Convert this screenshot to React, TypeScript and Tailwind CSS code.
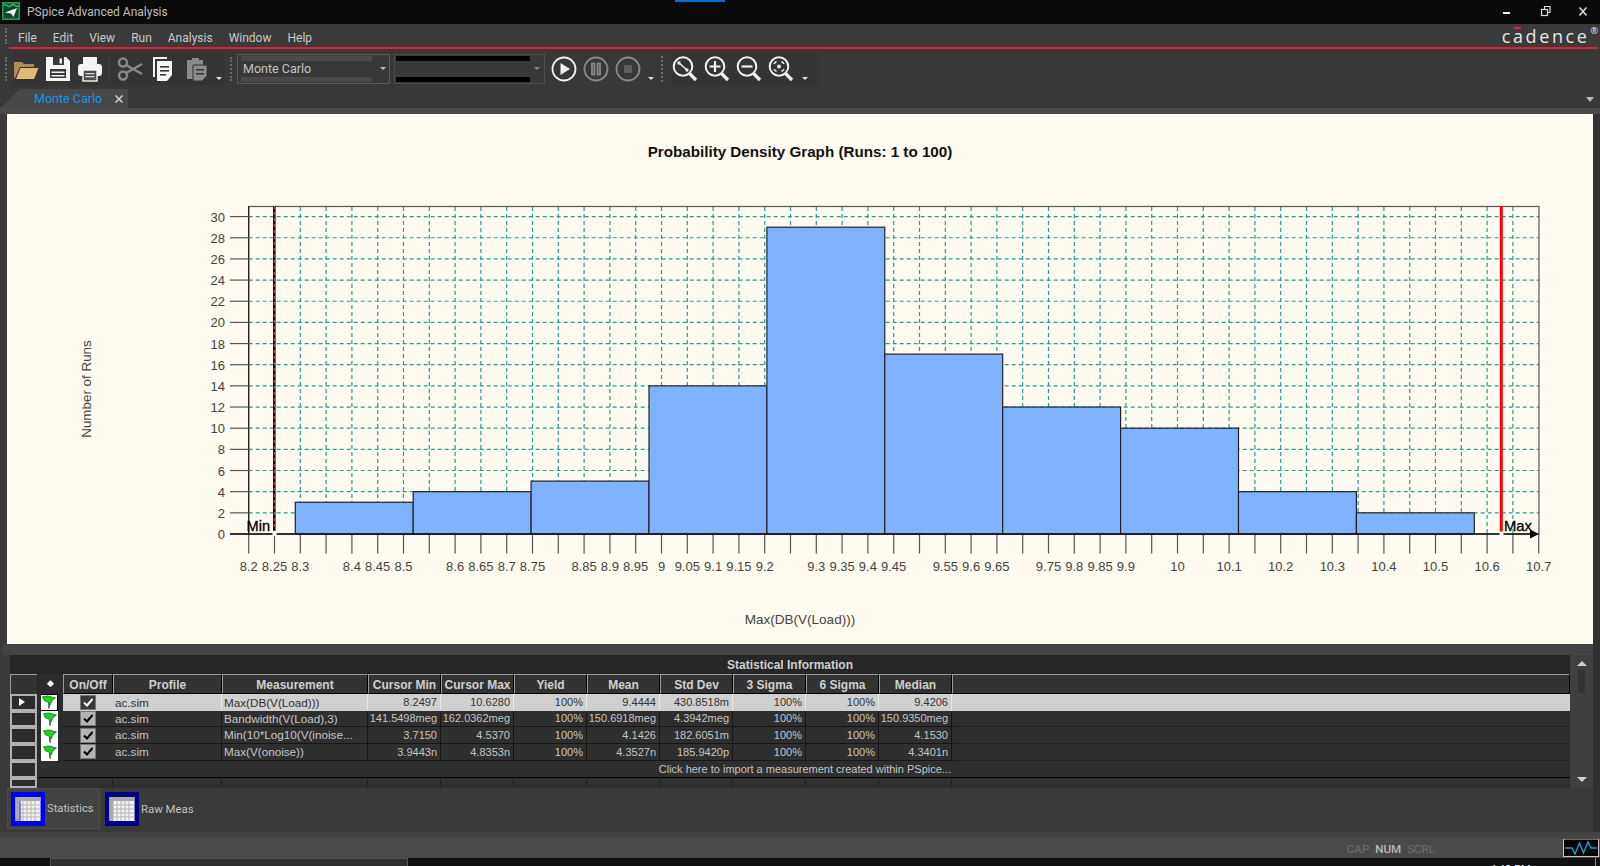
import React from "react";

const UI = "font-['Roboto','Noto_Sans',sans-serif]";
const GRID = "font-['Liberation_Sans',Arial,sans-serif]";

const yTicks = Array.from({ length: 16 }, (_, i) => i * 2);
const Y0 = 534;
const UNIT = 10.58;
const X0 = 248.7;
const XSTEP = 25.8;
const xTickCount = 50;
const bars = [3, 4, 5, 14, 29, 17, 12, 10, 4, 2];
const BAR0 = 295.3;
const BARW = 117.9;
const xLabels: [number, string][] = [
  [0, "8.2"], [1, "8.25"], [2, "8.3"], [4, "8.4"], [5, "8.45"], [6, "8.5"], [8, "8.6"], [9, "8.65"], [10, "8.7"], [11, "8.75"],
  [13, "8.85"], [14, "8.9"], [15, "8.95"], [16, "9"], [17, "9.05"], [18, "9.1"], [19, "9.15"], [20, "9.2"], [22, "9.3"], [23, "9.35"],
  [24, "9.4"], [25, "9.45"], [27, "9.55"], [28, "9.6"], [29, "9.65"], [31, "9.75"], [32, "9.8"], [33, "9.85"], [34, "9.9"], [36, "10"],
  [38, "10.1"], [40, "10.2"], [42, "10.3"], [44, "10.4"], [46, "10.5"], [48, "10.6"], [50, "10.7"],
];

function Chart() {
  const font = "'Liberation Sans', Arial, sans-serif";
  return (
    <svg viewBox="7 114 1586 530" className="block w-full h-full" fontFamily={font}>
      <text x="800" y="157" textAnchor="middle" fontSize="15.2" fontWeight="700" fill="#111">
        Probability Density Graph (Runs: 1 to 100)
      </text>
      <text transform="translate(91 389) rotate(-90)" textAnchor="middle" fontSize="13.4" fill="#444">
        Number of Runs
      </text>
      <text x="800" y="624" textAnchor="middle" fontSize="13.5" fill="#444">
        Max(DB(V(Load)))
      </text>
      {/* grid */}
      {yTicks.slice(1).map((t) => (
        <line key={t} x1={X0} x2="1539" y1={Y0 - t * UNIT} y2={Y0 - t * UNIT} stroke="#2a9a9a" strokeWidth="1.2" strokeDasharray="4 3" />
      ))}
      {Array.from({ length: xTickCount - 1 }, (_, i) => i + 1).map((i) => (
        <line key={i} x1={X0 + i * XSTEP} x2={X0 + i * XSTEP} y1="207" y2={Y0} stroke="#2a9a9a" strokeWidth="1.2" strokeDasharray="4 3" />
      ))}
      {/* frame */}
      <rect x={X0} y="206.5" width="1290.3" height={Y0 - 206.5} fill="none" stroke="#555" strokeWidth="1.2" />
      <line x1={X0} x2={X0} y1="206" y2={Y0} stroke="#222" strokeWidth="1.2" />
      {/* bars */}
      {bars.map((b, i) => (
        <rect key={i} x={BAR0 + i * BARW} y={Y0 - b * UNIT} width={BARW} height={b * UNIT} fill="#80b3ff" stroke="#222" strokeWidth="1.2" />
      ))}
      {/* y ticks */}
      {yTicks.map((t) => (
        <g key={t}>
          <line x1="230" x2={X0} y1={Y0 - t * UNIT} y2={Y0 - t * UNIT} stroke="#555" strokeWidth="1.2" />
          <text x="225" y={Y0 - t * UNIT + 5} textAnchor="end" fontSize="13" fill="#444">{t}</text>
        </g>
      ))}
      {/* x ticks */}
      {Array.from({ length: xTickCount + 1 }, (_, i) => i).map((i) => (
        <line key={i} x1={X0 + i * XSTEP} x2={X0 + i * XSTEP} y1={Y0} y2="553.5" stroke="#555" strokeWidth="1.2" />
      ))}
      {xLabels.map(([i, l]) => (
        <text key={l} x={X0 + i * XSTEP} y="571" textAnchor="middle" fontSize="13" fill="#444">{l}</text>
      ))}
      {/* axis */}
      <line x1="230" x2="1532" y1={Y0} y2={Y0} stroke="#111" strokeWidth="1.6" />
      <path d="M1530 529.5 L1539 534 L1530 538.5 Z" fill="#000" />
      {/* cursors */}
      <line x1="274.3" x2="274.3" y1="206" y2={Y0} stroke="#111" strokeWidth="2.6" />
      <line x1="274.3" x2="274.3" y1="206" y2={Y0} stroke="#e0536a" strokeWidth="1" strokeDasharray="3 3" />
      <line x1="1501.3" x2="1501.3" y1="206" y2={Y0} stroke="#ff0000" strokeWidth="3" />
      <rect x="272.5" y="531" width="4" height="5" fill="#fffbf0" />
      <rect x="1499.5" y="531.5" width="4" height="5" fill="#fffbf0" />
      <text x="246.5" y="531" fontSize="14.6" fill="#000" stroke="#000" strokeWidth="0.3">Min</text>
      <text x="1504" y="531" fontSize="14.8" fill="#000" stroke="#000" strokeWidth="0.3">Max</text>
    </svg>
  );
}

function Gripper({ h = "h-6" }: { h?: string }) {
  return <div className={`w-0 border-l-2 border-dotted border-[#6a6a6a] ${h}`} />;
}

function ArrowDown() {
  return <div className="w-0 h-0 border-l-[3px] border-r-[3px] border-t-[3px] border-l-transparent border-r-transparent border-t-[#e0e0e0]" />;
}

function Icon({ children, dim = false }: { children: React.ReactNode; dim?: boolean }) {
  return (
    <svg viewBox="0 0 26 26" className={`w-[26px] h-[26px] shrink-0 ${dim ? "opacity-45" : ""}`}>
      {children}
    </svg>
  );
}

function RoundBtn({ kind }: { kind: "play" | "pause" | "stop" }) {
  const c = kind === "play" ? "#f2f2f2" : "#8a8a8a";
  return (
    <svg viewBox="0 0 26 26" className="w-[26px] h-[26px] shrink-0">
      <circle cx="13" cy="13" r="11.5" fill="none" stroke={c} strokeWidth="1.8" />
      {kind === "play" && <path d="M9.5 7 L19 13 L9.5 19 Z" fill="#f2f2f2" />}
      {kind === "pause" && (
        <g stroke={c} strokeWidth="1.8" fill="none">
          <rect x="9" y="7.5" width="2.4" height="11" />
          <rect x="14.6" y="7.5" width="2.4" height="11" />
        </g>
      )}
      {kind === "stop" && <rect x="9" y="9" width="8" height="8" fill="#5e5e5e" />}
    </svg>
  );
}

function Magnifier({ kind }: { kind: "fit" | "in" | "out" | "area" }) {
  return (
    <svg viewBox="0 0 26 26" className="w-[26px] h-[26px] shrink-0" fill="none" stroke="#f0f0f0">
      <circle cx="11" cy="10.5" r="9.3" strokeWidth="2" />
      <path d="M17.5 17.5 L24 24" strokeWidth="3.2" />
      {kind === "in" && <path d="M5.5 10.5 H16.5 M11 5 V16" strokeWidth="2.2" />}
      {kind === "out" && <path d="M5.5 10.5 H16.5" strokeWidth="2.2" />}
      {kind === "fit" && (
        <g>
          <path d="M7.5 7.5 L14.5 13.5" strokeWidth="1.6" />
          <circle cx="7" cy="7" r="1.7" fill="#f0f0f0" stroke="none" />
          <circle cx="15" cy="14" r="1.7" fill="#f0f0f0" stroke="none" />
        </g>
      )}
      {kind === "area" && (
        <g>
          <circle cx="11" cy="10.5" r="2" fill="#f0f0f0" stroke="none" />
          <path d="M6 8 A6 6 0 0 1 8.5 5.5 M13.5 5.5 A6 6 0 0 1 16 8 M16 13 A6 6 0 0 1 13.5 15.5 M8.5 15.5 A6 6 0 0 1 6 13" strokeWidth="1.5" />
        </g>
      )}
    </svg>
  );
}

function TitleBar() {
  return (
    <div className="relative h-6 shrink-0 bg-[#0a0a0a] flex items-center pl-[2px] pr-[8px]">
      <div className="absolute left-[675px] top-0 w-[50px] h-[2px] bg-[#0a6fd0]" />
      <svg viewBox="0 0 18 18" className="w-[18px] h-[18px] mt-[-2px] shrink-0">
        <rect x="0.8" y="0.8" width="16.4" height="16.4" fill="#0d4a2c" stroke="#1f9a4e" strokeWidth="1.6" />
        <path d="M1 4 Q3 1.5 5 3.5 T9 3.5 T13 3.5 T17 3.5" fill="none" stroke="#35c06a" strokeWidth="1.2" />
        <path d="M3 10.5 L15 6 L11.5 15 L9 11.5 Z" fill="#f0f0f0" />
      </svg>
      <span className={`${UI} ml-[7px] text-[12px] text-[#bdbdbd]`}>PSpice Advanced Analysis</span>
      <div className="ml-auto flex items-center gap-[24px] text-[#e8e8e8]">
        <svg viewBox="0 0 14 14" className="w-[14px] h-[14px]"><rect x="1" y="7" width="7" height="2" fill="#eee" /></svg>
        <svg viewBox="0 0 14 14" className="w-[14px] h-[14px]" fill="none" stroke="#ddd" strokeWidth="1.2">
          <rect x="1.5" y="4.5" width="6" height="6" />
          <path d="M4.5 4 V1.5 H10 V7.5 H8" />
        </svg>
        <svg viewBox="0 0 14 14" className="w-[14px] h-[14px]" fill="none" stroke="#ddd" strokeWidth="1.5">
          <path d="M1.5 2.5 L8.5 10.5 M8.5 2.5 L1.5 10.5" />
        </svg>
      </div>
    </div>
  );
}

function MenuBar() {
  return (
    <div className="h-[25px] shrink-0 bg-[#3a3a3a] flex flex-col">
      <div className="flex-1 flex items-center pl-[5px] pr-[2px]">
        <Gripper h="h-[16px]" />
        <div className={`${UI} ml-[11px] mt-[5px] flex items-center gap-[15px] text-[12px] text-[#c9c9c9]`}>
          <span className="mr-px">File</span>
          <span className="mr-px">Edit</span>
          <span className="mr-px">View</span>
          <span className="mr-px">Run</span>
          <span className="mr-px">Analysis</span>
          <span className="mr-px">Window</span>
          <span>Help</span>
        </div>
        <div className="ml-auto flex items-start font-['Open_Sans',sans-serif] font-medium text-[#e6e6e6]">
          <span className="relative text-[18px] leading-[20px] tracking-[2.6px]">
            cadence
            <span className="absolute left-[12px] top-[1px] w-[7px] h-[2px] bg-[#d9283c]" />
          </span>
          <span className="text-[9px] leading-[12px] ml-[1px] -mt-[1px]">®</span>
        </div>
      </div>
      <div className="h-[3px] ml-[9px] mr-[2px] bg-[#e01e37] shrink-0" />
    </div>
  );
}

function Toolbar() {
  return (
    <div className="h-[39px] shrink-0 bg-[#383838] flex items-center pl-[5px]">
      <Gripper h="h-[24px]" />
      <div className="ml-[6px] flex items-center gap-[6px] bg-[#343434] h-[34px]">
        <Icon>
          <path d="M1 6 H9 L11 8 H21 V11 H7 L2 22 H1 Z" fill="#b08a55" />
          <path d="M7.5 12 H25.5 L21 23 H3 Z" fill="#e0b878" />
        </Icon>
        <Icon>
          <path d="M1 1 H21 L25 5 V25 H1 Z" fill="#f4f4f4" />
          <rect x="8" y="1" width="11" height="8" fill="#383838" />
          <rect x="14.5" y="2.5" width="2.5" height="5" fill="#f4f4f4" />
          <rect x="5" y="13" width="16" height="9" fill="#383838" />
          <rect x="6.5" y="15.5" width="13" height="1.5" fill="#f4f4f4" />
          <rect x="6.5" y="19" width="13" height="1.5" fill="#f4f4f4" />
        </Icon>
        <Icon>
          <rect x="6" y="1" width="14" height="7" fill="#f4f4f4" />
          <rect x="1" y="8" width="24" height="12" rx="3" fill="#f4f4f4" />
          <rect x="6" y="14" width="14" height="11" fill="#4d4d4d" stroke="#f4f4f4" strokeWidth="1.4" />
          <rect x="8.5" y="17" width="9" height="1.3" fill="#d8d8d8" />
          <rect x="8.5" y="20" width="9" height="1.3" fill="#d8d8d8" />
        </Icon>
        <div className="w-px h-[30px] bg-[#404040] mr-[1px]" />
        <Icon dim>
          <g fill="none" stroke="#f0f0f0" strokeWidth="2.4">
            <circle cx="6" cy="6.5" r="4" />
            <circle cx="6" cy="19.5" r="4" />
            <path d="M9 9 L25 18 M9 17 L25 8" />
          </g>
        </Icon>
        <div className="mr-[1px]">
          <Icon>
            <path d="M4 1 H18 V3 H6 V21 H4 Z" fill="#f4f4f4" />
            <path d="M8 5 H23 V19 L18 25 H8 Z" fill="#f4f4f4" />
            <rect x="11" y="10" width="9" height="1.6" fill="#383838" />
            <rect x="11" y="14" width="9" height="1.6" fill="#383838" />
            <rect x="11" y="18" width="6" height="1.6" fill="#383838" />
          </Icon>
        </div>
        <div className="ml-[2px]">
          <Icon dim>
            <path d="M3 4 H8 V2 H15 V4 H19 V23 H3 Z" fill="#f4f4f4" />
            <path d="M9 9 H23 V20 L18 25 H9 Z" fill="#f4f4f4" stroke="#383838" />
            <rect x="12" y="13" width="8" height="1.5" fill="#383838" />
            <rect x="12" y="17" width="8" height="1.5" fill="#383838" />
          </Icon>
        </div>
        <div className="mt-[20px] mr-[3px]"><ArrowDown /></div>
      </div>
      <div className="ml-[5px]"><Gripper h="h-[24px]" /></div>
      {/* combo 1 */}
      <div className="ml-[5px] w-[153px] h-[30px] border border-[#5a5a5a] flex items-center pr-[3px]">
        <div className="w-[135px] h-full flex flex-col justify-between py-[1px] pl-[3px] pr-[1px] relative">
          <div className="h-[5px] bg-[#494949]" />
          <div className="h-[5px] bg-[#494949]" />
          <span className={`${UI} absolute left-[5px] top-[5px] text-[12.5px] leading-[18px] text-[#c4c4c4]`}>Monte Carlo</span>
        </div>
        <div className="ml-auto opacity-80"><ArrowDown /></div>
      </div>
      {/* combo 2 */}
      <div className="ml-[4px] w-[151px] h-[30px] border border-[#4e4e4e] flex items-center pr-[4px]">
        <div className="w-[135px] h-full flex flex-col justify-between py-[1px] pl-[1px]">
          <div className="h-[5px] bg-black" />
          <div className="h-[5px] bg-black" />
        </div>
        <div className="ml-auto opacity-50"><ArrowDown /></div>
      </div>
      <div className="ml-[6px] flex items-center gap-[6px]">
        <RoundBtn kind="play" />
        <RoundBtn kind="pause" />
        <RoundBtn kind="stop" />
      </div>
      <div className="ml-[7px] mt-[20px]"><ArrowDown /></div>
      <div className="ml-[7px]"><Gripper h="h-[26px]" /></div>
      <div className="ml-[9px] flex items-center gap-[6px] bg-[#343434] h-[34px] pr-[9px]">
        <Magnifier kind="fit" />
        <Magnifier kind="in" />
        <Magnifier kind="out" />
        <Magnifier kind="area" />
        <div className="ml-[2px] mt-[20px]"><ArrowDown /></div>
      </div>
    </div>
  );
}

function TabStrip() {
  return (
    <div className="h-5 shrink-0 bg-[#383838] flex items-end pr-[6px]">
      <div className="relative w-[128px] h-[19px] ml-0 flex items-center">
        <svg viewBox="0 0 128 19" className="absolute inset-0 w-full h-full">
          <path d="M0 19 L20 0 H128 V19 Z" fill="#474747" />
        </svg>
        <span className={`${UI} relative ml-[34px] mt-[2px] text-[12.5px] text-[#0c9be8]`}>Monte Carlo</span>
        <svg viewBox="0 0 10 10" className="relative ml-auto mr-[4px] w-[10px] h-[10px]" fill="none" stroke="#cfcfcf" strokeWidth="1.6">
          <path d="M1.5 1.5 L8.5 8.5 M8.5 1.5 L1.5 8.5" />
        </svg>
      </div>
      <div className="ml-auto mb-[6px] w-0 h-0 border-l-[4px] border-r-[4px] border-t-[5px] border-l-transparent border-r-transparent border-t-[#bdbdbd]" />
    </div>
  );
}

const colW = ["w-[50px]", "w-[109px]", "w-[146px]", "w-[73px]", "w-[73px]", "w-[73px]", "w-[73px]", "w-[73px]", "w-[73px]", "w-[73px]", "w-[73px]"];
const headers = ["On/Off", "Profile", "Measurement", "Cursor Min", "Cursor Max", "Yield", "Mean", "Std Dev", "3 Sigma", "6 Sigma", "Median"];
const rows: string[][] = [
  ["ac.sim", "Max(DB(V(Load)))", "8.2497", "10.6280", "100%", "9.4444", "430.8518m", "100%", "100%", "9.4206"],
  ["ac.sim", "Bandwidth(V(Load),3)", "141.5498meg", "162.0362meg", "100%", "150.6918meg", "4.3942meg", "100%", "100%", "150.9350meg"],
  ["ac.sim", "Min(10*Log10(V(inoise...", "3.7150", "4.5370", "100%", "4.1426", "182.6051m", "100%", "100%", "4.1530"],
  ["ac.sim", "Max(V(onoise))", "3.9443n", "4.8353n", "100%", "4.3527n", "185.9420p", "100%", "100%", "4.3401n"],
];

function HeadCell({ className, children }: { className: string; children?: React.ReactNode }) {
  return (
    <div className={`${className} shrink-0 h-full flex items-center justify-center pt-px bg-[#333] border-t border-l border-t-[#9a9a9a] border-l-[#9a9a9a] border-b border-r border-b-black border-r-black text-[12px] font-bold text-[#cfcfcf]`}>
      {children}
    </div>
  );
}

function RowHead({ active = false }: { active?: boolean }) {
  return (
    <div className="w-[28px] shrink-0 h-full pr-px">
      <div className="h-full border-2 border-[#b0b0b0] bg-[#2c2c2c] flex items-center pl-[7px]">
        {active && <div className="w-0 h-0 border-t-[4px] border-b-[4px] border-l-[6px] border-t-transparent border-b-transparent border-l-white" />}
      </div>
    </div>
  );
}

function FlagCell({ active }: { active: boolean }) {
  return (
    <div className="w-[24px] shrink-0 h-full pl-[3px] pr-[4px] bg-[#2c2c2c]">
      <div className={`h-full bg-white flex items-center justify-center ${active ? "border-y border-r border-black" : ""}`}>
        <svg viewBox="0 0 12 12" className="w-[14px] h-[14px]">
          <path d="M6 4 V11.5" stroke="#111" strokeWidth="1" />
          <path d="M0.5 1.5 L5 0.8 L11.5 2.5 L8.5 5 L7 8.5 L5 6 L2 5 Z" fill="#16d616" stroke="#0a5a20" strokeWidth="0.6" />
        </svg>
      </div>
    </div>
  );
}

function Check({ active }: { active: boolean }) {
  return (
    <div className={`${colW[0]} shrink-0 h-full flex items-center justify-center ${active ? "bg-[#cfcfcf]" : "bg-[#2f2f2f] border-b border-[#1a1a1a]"}`}>
      <div className={`w-[16px] h-[15px] border border-[#777] p-px ${active ? "bg-[#3a3a3a]" : "bg-[#b4b4b4]"}`}>
        <svg viewBox="0 0 12 11" className="w-full h-full">
          <path d="M2 5.5 L5 8.5 L10.5 2" fill="none" stroke={active ? "#fff" : "#000"} strokeWidth="2" />
        </svg>
      </div>
    </div>
  );
}

function DataTable() {
  return (
    <div className={`${GRID} w-[1560px] h-[133px] shrink-0 bg-[#262626] flex flex-col overflow-hidden`}>
      <div className="h-[19px] shrink-0 flex items-center justify-center pt-px text-[12px] font-bold text-[#cfcfcf]">
        Statistical Information
      </div>
      <div className="h-[20px] shrink-0 flex">
        <div className="w-[28px] shrink-0 h-full pr-px">
          <div className="h-full bg-[#333] border-t border-l border-[#9a9a9a]" />
        </div>
        <div className="w-[25px] shrink-0 h-full flex items-center justify-center text-white text-[9px] bg-[#2c2c2c]">◆</div>
        {headers.map((h, i) => (
          <HeadCell key={h} className={colW[i]}>{h}</HeadCell>
        ))}
        <HeadCell className="flex-1" />
      </div>
      {rows.map((r, ri) => {
        const active = ri === 0;
        return (
          <div key={ri} className="h-[16.7px] shrink-0 flex">
            <RowHead active={active} />
            <FlagCell active={active} />
            <div className="w-px shrink-0 bg-[#2c2c2c]" />
            <Check active={active} />
            {r.map((c, i) => (
              <div
                key={i}
                className={`${colW[i + 1]} shrink-0 h-full flex items-center whitespace-nowrap ${i < 2 ? "justify-start pl-[2px] text-[11.7px]" : "justify-end pr-[3px] text-[11px]"} ${active ? "bg-[#cfcfcf] text-[#333] border-r border-[#e8e8e8]" : "bg-[#2f2f2f] text-[#c4c4c4] border-b border-r border-[#161616]"}`}
              >
                {c}
              </div>
            ))}
            <div className={`flex-1 h-full ${active ? "bg-[#cfcfcf]" : "bg-[#2f2f2f] border-b border-dotted border-[#161616]"}`} />
          </div>
        );
      })}
      <div className="h-[17px] shrink-0 flex">
        <RowHead />
        <div className="w-[914px] shrink-0 h-full flex items-center justify-end pr-[1px] bg-[#2f2f2f] border-b border-black text-[11px] text-[#c4c4c4] whitespace-nowrap">
          Click here to import a measurement created within PSpice...
        </div>
        <div className="flex-1 h-full bg-[#2f2f2f] border-b border-black" />
      </div>
      <div className="flex-1 flex">
        <RowHead />
        <div className="w-[25px] shrink-0 bg-[#2f2f2f]" />
        {colW.map((w, i) => (
          <div key={i} className={`${w} shrink-0 bg-[#2f2f2f] border-r border-dotted border-[#161616]`} />
        ))}
        <div className="flex-1 bg-[#2f2f2f]" />
      </div>
    </div>
  );
}

function GridIcon({ active }: { active: boolean }) {
  return (
    <svg viewBox="0 0 34 34" className="w-[34px] h-[34px] shrink-0">
      <rect width="34" height="34" fill={active ? "#0000f0" : "#000080"} />
      <rect x="4.5" y="5" width="25" height="24" fill="#f2f2f2" />
      <rect x="4.5" y="5" width="25" height="4" fill="#a8a8a8" />
      <rect x="4.5" y="5" width="4" height="24" fill="#a8a8a8" />
      {[13, 17, 21, 25].map((y) => (
        <line key={y} x1="4.5" x2="29.5" y1={y} y2={y} stroke="#b5b5b5" strokeWidth="1" />
      ))}
      {[12, 16, 20, 24].map((x) => (
        <line key={x} y1="5" y2="29" x1={x} x2={x} stroke="#b5b5b5" strokeWidth="1" />
      ))}
      {active && <line x1="9" x2="9" y1="9" y2="29" stroke="#2020e0" strokeWidth="1" />}
    </svg>
  );
}

function BottomTabs() {
  return (
    <div className="h-[44px] shrink-0 bg-[#3a3a3a] flex items-start pl-[7px]">
      <div className="h-[41px] w-[93px] bg-[#424242] border border-[#4d4d4d] flex items-center pl-[3px] gap-[2px]">
        <GridIcon active />
        <span className={`${UI} text-[11.2px] text-[#c0c0c0] mt-[2px]`}>Statistics</span>
      </div>
      <div className="h-[41px] ml-[5px] flex items-center gap-[2px]">
        <GridIcon active={false} />
        <span className={`${UI} text-[11.4px] text-[#c0c0c0] mt-[3px]`}>Raw Meas</span>
      </div>
    </div>
  );
}

function StatusBar() {
  return (
    <div className="h-5 shrink-0 bg-[#4a4a4a] flex items-center justify-end">
      <div className={`${UI} flex items-center gap-[6px] mt-[3px] text-[11.6px] text-[#707070] mr-[128px]`}>
        <span>CAP</span>
        <span className="font-medium text-[#b9b9b9]">NUM</span>
        <span>SCRL</span>
      </div>
      <svg viewBox="0 0 36 18" className="w-[36px] h-[18px] mr-[1px] shrink-0">
        <rect x="0.5" y="0" width="35" height="17.5" fill="#050505" stroke="#c8c8c8" />
        <path d="M2 9 H9 L12 15 L16.5 4 L20.5 14 L25 3 L28 9 H34" fill="none" stroke="#19a3c7" strokeWidth="1.4" />
      </svg>
    </div>
  );
}

export default function App() {
  return (
    <div className="w-[1600px] h-[866px] overflow-hidden bg-[#3a3a3a] flex flex-col">
      <TitleBar />
      <MenuBar />
      <Toolbar />
      <TabStrip />
      <div className="h-[6px] shrink-0 bg-[#4a4a4a]" />
      <div className="shrink-0 flex flex-col border-r-[7px] border-[#303030]">
        <div className="h-[530px] shrink-0 pl-[7px]">
          <div className="h-full bg-[#fffbf0]">
            <Chart />
          </div>
        </div>
        <div className="h-[11px] shrink-0 bg-[#434343] ml-[3px]" />
        <div className="h-[133px] shrink-0 flex pl-[10px] bg-[#3a3a3a]">
          <DataTable />
          <div className="flex-1 bg-[#3f3f3f] flex flex-col items-center pt-[6px] pb-[6px]">
            <div className="w-0 h-0 border-l-[5px] border-r-[5px] border-b-[5px] border-l-transparent border-r-transparent border-b-[#d0d0d0]" />
            <div className="w-[7px] h-[23px] mt-[4px] bg-[#333]" />
            <div className="mt-auto w-0 h-0 border-l-[5px] border-r-[5px] border-t-[5px] border-l-transparent border-r-transparent border-t-[#d0d0d0]" />
          </div>
        </div>
        <BottomTabs />
      </div>
      <div className="h-[6px] shrink-0 bg-[#434343]" />
      <StatusBar />
      <div className="flex-1 bg-[#111] flex items-start pl-[50px]">
        <div className="w-[358px] h-[8px] bg-[#2e2e2e] border-t border-l border-r border-[#555]" />
        <span className={`${UI} ml-[1082px] mt-[6px] text-[11px] leading-[12px] text-white`}>4:40 PM</span>
        <div className="ml-[65px] w-px h-[8px] bg-[#888]" />
      </div>
    </div>
  );
}
